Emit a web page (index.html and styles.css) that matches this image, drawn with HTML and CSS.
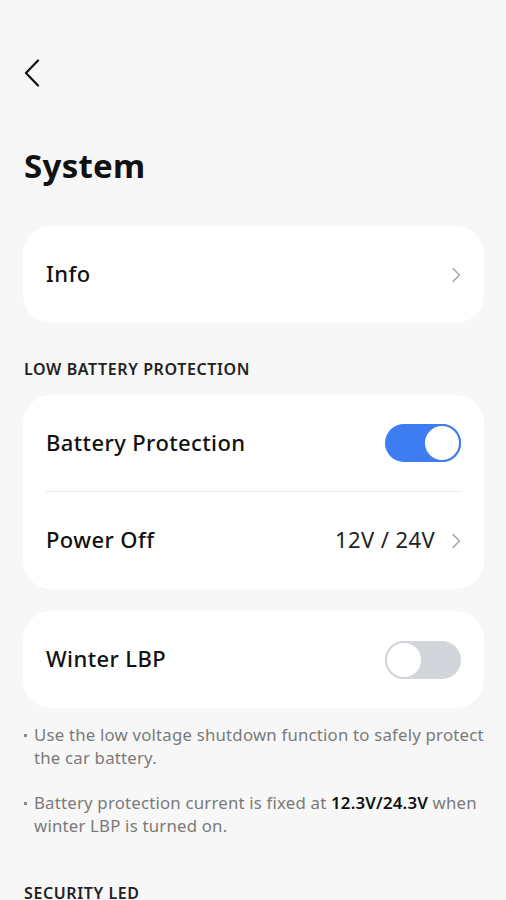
FILE: index.html
```html
<!DOCTYPE html>
<html>
<head>
<meta charset="utf-8">
<link rel="stylesheet" href="styles.css">
</head>
<body>
<div class="page">
  <div class="topbar">
    <svg class="back" width="16" height="28" viewBox="0 0 16 28"><path d="M14 1.5 L2 14 L14 26.5" fill="none" stroke="#111" stroke-width="2.2" stroke-linecap="round" stroke-linejoin="round"/></svg>
  </div>
  <h1 class="title">System</h1>

  <div class="card">
    <div class="row">
      <span class="label">Info</span>
      <span class="right"><svg class="chev" width="10" height="16" viewBox="0 0 10 16"><path d="M2 1.5 L8.5 8 L2 14.5" fill="none" stroke="#a8a8a8" stroke-width="1.6" stroke-linecap="round" stroke-linejoin="round"/></svg></span>
    </div>
  </div>

  <div class="section">LOW BATTERY PROTECTION</div>
  <div class="card">
    <div class="row">
      <span class="label">Battery Protection</span>
      <span class="toggle on"><span class="knob"></span></span>
    </div>
    <div class="divider"></div>
    <div class="row">
      <span class="label">Power Off</span>
      <span class="right"><span class="value">12V / 24V</span><svg class="chev" width="10" height="16" viewBox="0 0 10 16"><path d="M2 1.5 L8.5 8 L2 14.5" fill="none" stroke="#a8a8a8" stroke-width="1.6" stroke-linecap="round" stroke-linejoin="round"/></svg></span>
    </div>
  </div>

  <div class="card card-gap">
    <div class="row">
      <span class="label">Winter LBP</span>
      <span class="toggle off"><span class="knob"></span></span>
    </div>
  </div>

  <ul class="notes">
    <li>Use the low voltage shutdown function to safely protect the car battery.</li>
    <li>Battery protection current is fixed at <b>12.3V/24.3V</b> when winter LBP is turned on.</li>
  </ul>

  <div class="section section-last">SECURITY LED</div>
</div>
</body>
</html>
```
FILE: styles.css
```css
html, body {
  margin: 0;
  padding: 0;
  background: #f7f7f7;
}
body {
  font-family: "Noto Sans", "Open Sans", sans-serif;
  color: #111;
}
.page {
  padding: 0 22px 0 23px;
}
.topbar {
  height: 146px;
  padding-top: 59px;
  box-sizing: border-box;
}
.back {
  display: block;
  margin-left: 1px;
}
.title {
  margin: 0;
  font-size: 33px;
  font-weight: 700;
  line-height: 40px;
  height: 40px;
  padding-left: 1px;
  letter-spacing: 0.3px;
}
.card {
  background: #fff;
  border-radius: 28px;
  margin-top: 40px;
  padding: 0 23px;
}
.card-gap {
  margin-top: 22px;
}
.row {
  display: flex;
  align-items: center;
  justify-content: space-between;
  height: 97px;
}
.label {
  font-size: 22px;
  font-weight: 500;
  letter-spacing: 0.4px;
  line-height: 30px;
  margin-top: -3px;
}
.right {
  display: flex;
  align-items: center;
  gap: 16px;
}
.value {
  font-size: 22px;
  letter-spacing: 0.4px;
  line-height: 30px;
  color: #222;
  margin-top: -3px;
}
.chev {
  display: block;
}
.divider {
  height: 1px;
  background: #e8e8e8;
}
.section {
  margin-top: 36px;
  margin-left: 1px;
  font-size: 16px;
  font-weight: 600;
  letter-spacing: 0.6px;
  color: #222;
  line-height: 20px;
  margin-bottom: 16px;
}
.section + .card { margin-top: 0; }
.section + .card .row:first-child { height: 96px; }
.toggle {
  position: relative;
  width: 76px;
  height: 38px;
  border-radius: 19px;
  box-sizing: border-box;
  display: block;
}
.toggle.on {
  background: #3e7cf1;
}
.toggle.off {
  background: #d2d5d9;
}
.knob {
  position: absolute;
  top: 0;
  width: 38px;
  height: 38px;
  border-radius: 50%;
  background: #fff;
  box-sizing: border-box;
}
.toggle.on .knob {
  right: 0;
  border: 2.5px solid #3e7cf1;
}
.toggle.off .knob {
  left: 0;
  border: 2.5px solid #d2d5d9;
}
.notes {
  list-style: none;
  margin: 15px -12px 0 0;
  padding: 0;
  color: #7a7a7a;
  font-size: 16.8px;
  letter-spacing: 0.2px;
  line-height: 23px;
}
.notes li {
  position: relative;
  padding-left: 11px;
  margin-bottom: 22px;
}
.notes li::before {
  content: "";
  position: absolute;
  left: 1px;
  top: 11px;
  width: 3px;
  height: 3px;
  background: #8a8a8a;
}
.notes b {
  color: #111;
  font-weight: 600;
}
.section-last {
  margin-top: 46px;
}
```
